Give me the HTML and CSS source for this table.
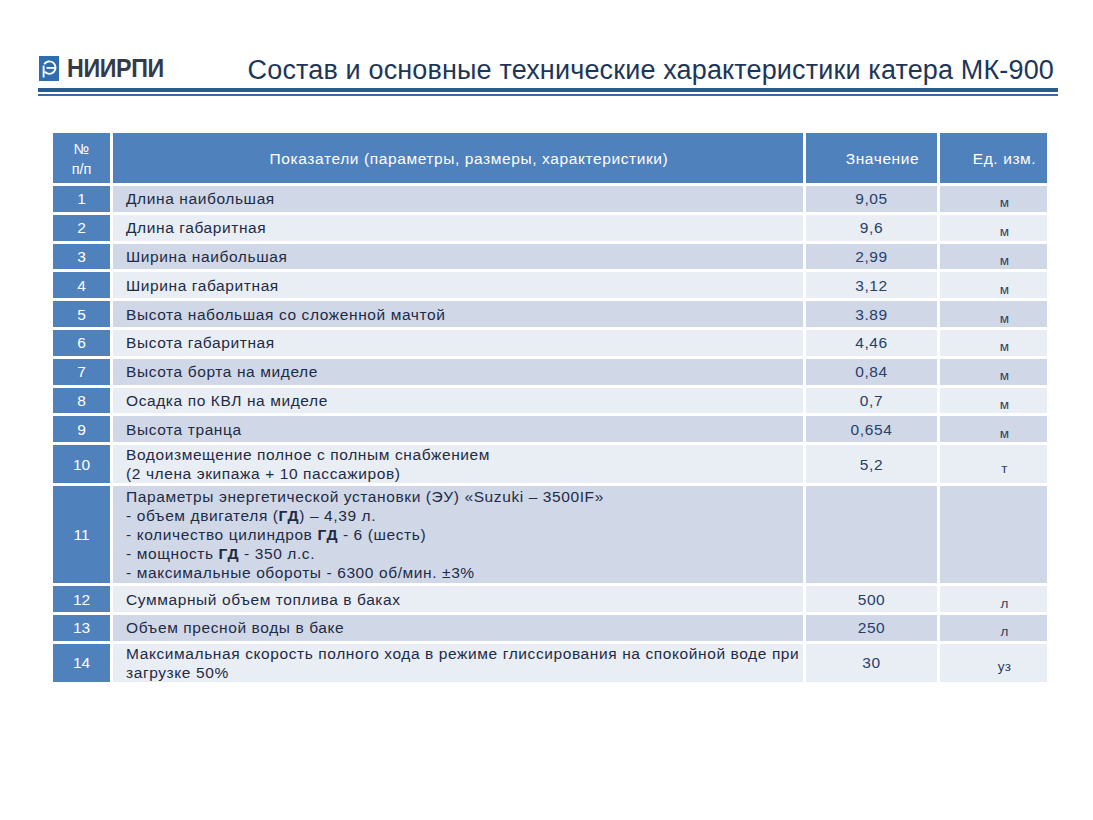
FILE: index.html
```html
<!DOCTYPE html>
<html lang="ru">
<head>
<meta charset="utf-8">
<title>Состав и основные технические характеристики катера МК-900</title>
<link rel="stylesheet" href="styles.css">
</head>
<body>
<div class="page">
  <header class="top">
    <div class="logo">
      <svg class="logo-mark" viewBox="0 0 20 25" width="20" height="25">
        <rect x="0" y="0" width="20" height="25" fill="#2d6db0"/>
        <path d="M5.2 8.2 A6.2 6.2 0 1 1 5.6 15.6" fill="none" stroke="#fff" stroke-width="1.9"/>
        <path d="M7.5 11.9 H16.4" stroke="#fff" stroke-width="1.8"/>
        <path d="M4.6 9.5 V21.5" stroke="#fff" stroke-width="1.9"/>
      </svg>
      <span class="logo-text">НИИРПИ</span>
    </div>
    <h1 class="title">Состав и основные технические характеристики катера МК-900</h1>
  </header>
  <div class="rule-thick"></div>
  <div class="rule-thin"></div>

  <table class="spec">
    <colgroup>
      <col class="c-num">
      <col class="c-name">
      <col class="c-val">
      <col class="c-unit">
    </colgroup>
    <thead>
      <tr class="head">
        <th class="h-num">№<br>п/п</th>
        <th class="h-name">Показатели (параметры, размеры, характеристики)</th>
        <th class="h-val">Значение</th>
        <th class="h-unit">Ед. изм.</th>
      </tr>
    </thead>
    <tbody>
      <tr class="odd r1"><td class="num">1</td><td class="name">Длина наибольшая</td><td class="val">9,05</td><td class="unit">м</td></tr>
      <tr class="even r1"><td class="num">2</td><td class="name">Длина габаритная</td><td class="val">9,6</td><td class="unit">м</td></tr>
      <tr class="odd r1"><td class="num">3</td><td class="name">Ширина наибольшая</td><td class="val">2,99</td><td class="unit">м</td></tr>
      <tr class="even r1"><td class="num">4</td><td class="name">Ширина габаритная</td><td class="val">3,12</td><td class="unit">м</td></tr>
      <tr class="odd r1"><td class="num">5</td><td class="name">Высота набольшая со сложенной мачтой</td><td class="val">3.89</td><td class="unit">м</td></tr>
      <tr class="even r1"><td class="num">6</td><td class="name">Высота габаритная</td><td class="val">4,46</td><td class="unit">м</td></tr>
      <tr class="odd r1"><td class="num">7</td><td class="name">Высота борта на миделе</td><td class="val">0,84</td><td class="unit">м</td></tr>
      <tr class="even r1"><td class="num">8</td><td class="name">Осадка по КВЛ на миделе</td><td class="val">0,7</td><td class="unit">м</td></tr>
      <tr class="odd r1"><td class="num">9</td><td class="name">Высота транца</td><td class="val">0,654</td><td class="unit">м</td></tr>
      <tr class="even r2"><td class="num">10</td><td class="name">Водоизмещение полное с полным снабжением<br>(2 члена экипажа + 10 пассажиров)</td><td class="val">5,2</td><td class="unit">т</td></tr>
      <tr class="odd r5"><td class="num">11</td><td class="name">Параметры энергетической установки (ЭУ) «Suzuki – 3500IF»<br>- объем двигателя (<b>ГД</b>) – 4,39 л.<br>- количество цилиндров <b>ГД</b> - 6 (шесть)<br>- мощность <b>ГД</b> - 350 л.с.<br>- максимальные обороты - 6300 об/мин. ±3%</td><td class="val"></td><td class="unit"></td></tr>
      <tr class="even r1"><td class="num">12</td><td class="name">Суммарный объем топлива в баках</td><td class="val">500</td><td class="unit">л</td></tr>
      <tr class="odd r1"><td class="num">13</td><td class="name">Объем пресной воды в баке</td><td class="val">250</td><td class="unit">л</td></tr>
      <tr class="even r2b"><td class="num">14</td><td class="name">Максимальная скорость полного хода в режиме глиссирования на спокойной воде при загрузке 50%</td><td class="val">30</td><td class="unit">уз</td></tr>
    </tbody>
  </table>
</div>
</body>
</html>
```

FILE: styles.css
```css
html, body {
  margin: 0;
  padding: 0;
  background: #ffffff;
}

body {
  font-family: "Liberation Sans", Arial, sans-serif;
  color: #1e2b45;
}

.page {
  width: 1093px;
  height: 820px;
}

.top {
  display: flex;
  align-items: flex-end;
  justify-content: space-between;
  padding: 52px 39px 0 39px;
  height: 34px;
}

.logo {
  display: flex;
  align-items: center;
  gap: 8px;
  height: 25px;
  margin-bottom: 5px;
}

.logo-mark {
  display: block;
  flex: none;
}

.logo-text {
  font-weight: bold;
  font-size: 25px;
  letter-spacing: -0.4px;
  color: #343b48;
  line-height: 25px;
  display: inline-block;
  transform: scaleX(0.93);
  transform-origin: left center;
}

.title {
  margin: 0;
  font-weight: normal;
  font-size: 27px;
  letter-spacing: 0.15px;
  line-height: 32px;
  color: #1d3658;
  white-space: nowrap;
}

.rule-thick {
  margin: 2px 35px 0 38px;
  height: 4px;
  background: #2b5a8e;
}

.rule-thin {
  margin: 2px 35px 0 38px;
  height: 2px;
  background: #3a6aa0;
}

.spec {
  margin: 34px 0 0 50px;
  border-collapse: separate;
  border-spacing: 3px;
  table-layout: fixed;
  width: 1000px;
  font-size: 15.5px;
  letter-spacing: 0.6px;
}

.c-num { width: 57px; }
.c-name { width: 690px; }
.c-val { width: 131px; }
.c-unit { width: 107px; }

.spec th, .spec td {
  padding: 0;
  line-height: 19px;
}

.head {
  height: 50px;
}

.head th {
  background: #4f81bd;
  color: #ffffff;
  font-weight: normal;
  font-size: 15.5px;
  vertical-align: middle;
  text-align: center;
}

.spec .h-num {
  font-size: 14.5px;
  letter-spacing: 0;
  line-height: 20px;
  padding-top: 2px;
}

.spec .h-name,
.spec .h-val,
.spec .h-unit {
  padding-left: 22px;
}

.r1 { height: 25.8px; }
.r2 { height: 38px; }
.r5 { height: 97px; }
.r2b { height: 37px; }

.odd td { background: #d0d8e8; }
.even td { background: #e9edf4; }

.spec td.num {
  background: #4f81bd;
  color: #ffffff;
  text-align: center;
  vertical-align: middle;
  letter-spacing: 0;
}

.spec .name {
  padding-left: 13px;
  vertical-align: middle;
  text-align: left;
}

.val {
  text-align: center;
  vertical-align: middle;
  color: #27406a;
}

.spec .unit {
  text-align: center;
  vertical-align: middle;
  font-size: 13.5px;
  letter-spacing: 0.3px;
  line-height: 17px;
  padding-left: 22px;
  padding-top: 8px;
  color: #2d3f62;
}
```
